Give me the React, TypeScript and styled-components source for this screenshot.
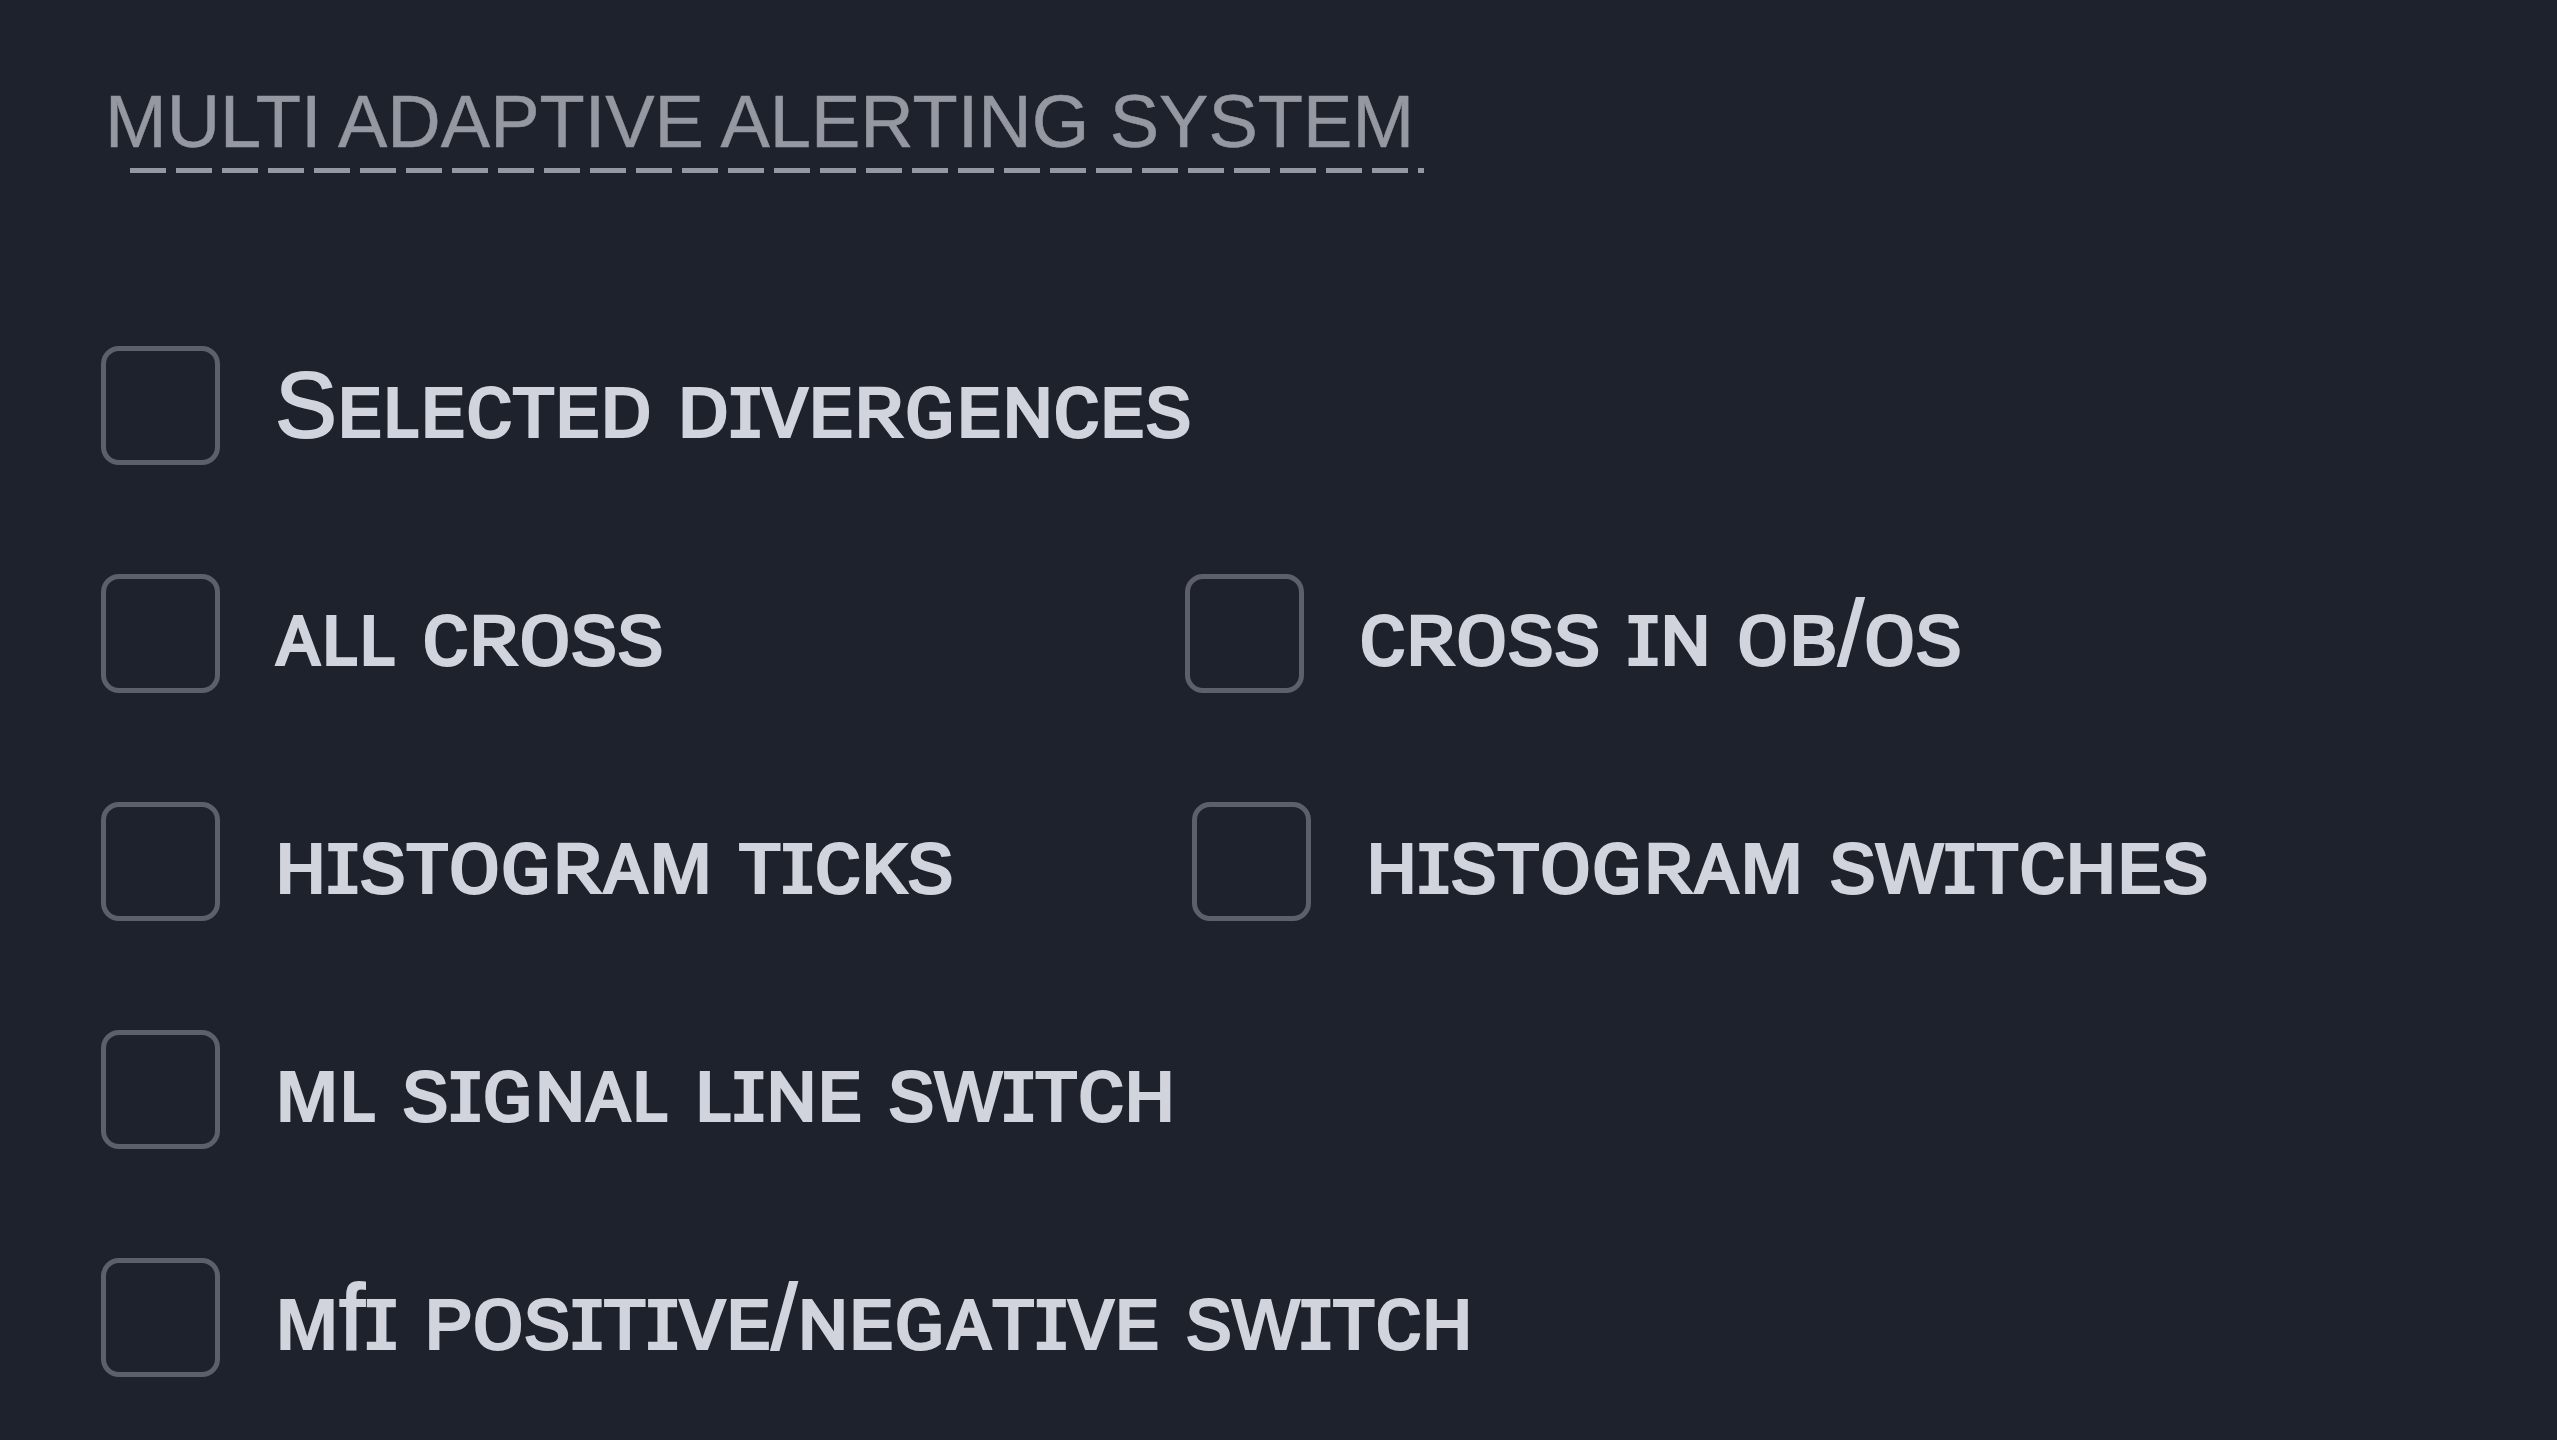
import React from "react";
import styled, { createGlobalStyle } from "styled-components";

const Global = createGlobalStyle`
  html, body {
    margin: 0;
    padding: 0;
    background: #1e222d;
  }
  #root {
    min-height: 100vh;
  }
`;

const Page = styled.div`
  min-height: 100vh;
  box-sizing: border-box;
  background: #1e222d;
  padding: 85px 0 0 101px;
  display: flex;
  flex-direction: column;
`;

const Title = styled.div`
  position: relative;
  font-family: "Liberation Sans", Arial, sans-serif;
  font-size: 74px;
  line-height: 1;
  color: #9598a1;
  margin-left: 4px;
  align-self: flex-start;
  -webkit-text-stroke: 0.5px #9598a1;

  &::after {
    content: "";
    position: absolute;
    left: 25px;
    right: -10px;
    bottom: -14px;
    height: 5px;
    background: repeating-linear-gradient(
      90deg,
      #9598a1 0 36px,
      transparent 36px 46px
    );
  }
`;

const List = styled.div`
  margin-top: 187px;
  display: flex;
  flex-direction: column;
  gap: 109px;
`;

const Row = styled.div`
  display: grid;
  grid-template-columns: 1084px auto;
  align-items: center;
`;

const Item = styled.label<{ $shift?: number }>`
  display: flex;
  align-items: center;
  gap: 55px;
  margin-left: ${(p) => p.$shift ?? 0}px;
  cursor: pointer;
`;

const Box = styled.span`
  flex: none;
  width: 119px;
  height: 119px;
  box-sizing: border-box;
  border: 5px solid #5d606b;
  border-radius: 18px;
  background: #1e222d;
`;

const Label = styled.span`
  font-family: "Liberation Sans", Arial, sans-serif;
  font-size: 93px;
  line-height: 1;
  color: #d1d4dc;
  -webkit-text-stroke: 2px #d1d4dc;
  white-space: nowrap;
`;

type Opt = { text: string; shift?: number };

const rows: Opt[][] = [
  [{ text: "Sᴇʟᴇᴄᴛᴇᴅ ᴅɪᴠᴇʀɢᴇɴᴄᴇs" }],
  [{ text: "ᴀʟʟ ᴄʀᴏss" }, { text: "ᴄʀᴏss ɪɴ ᴏʙ/ᴏs" }],
  [{ text: "ʜɪsᴛᴏɢʀᴀᴍ ᴛɪᴄᴋs" }, { text: "ʜɪsᴛᴏɢʀᴀᴍ sᴡɪᴛᴄʜᴇs", shift: 7 }],
  [{ text: "ᴍʟ sɪɢɴᴀʟ ʟɪɴᴇ sᴡɪᴛᴄʜ" }],
  [{ text: "ᴍfɪ ᴘᴏsɪᴛɪᴠᴇ/ɴᴇɢᴀᴛɪᴠᴇ sᴡɪᴛᴄʜ" }],
];

export default function App() {
  return (
    <>
      <Global />
      <Page>
        <Title>MULTI ADAPTIVE ALERTING SYSTEM</Title>
        <List>
          {rows.map((r, i) => (
            <Row key={i}>
              {r.map((o, j) => (
                <Item key={j} $shift={o.shift}>
                  <Box role="checkbox" aria-checked="false" />
                  <Label>{o.text}</Label>
                </Item>
              ))}
            </Row>
          ))}
        </List>
      </Page>
    </>
  );
}
